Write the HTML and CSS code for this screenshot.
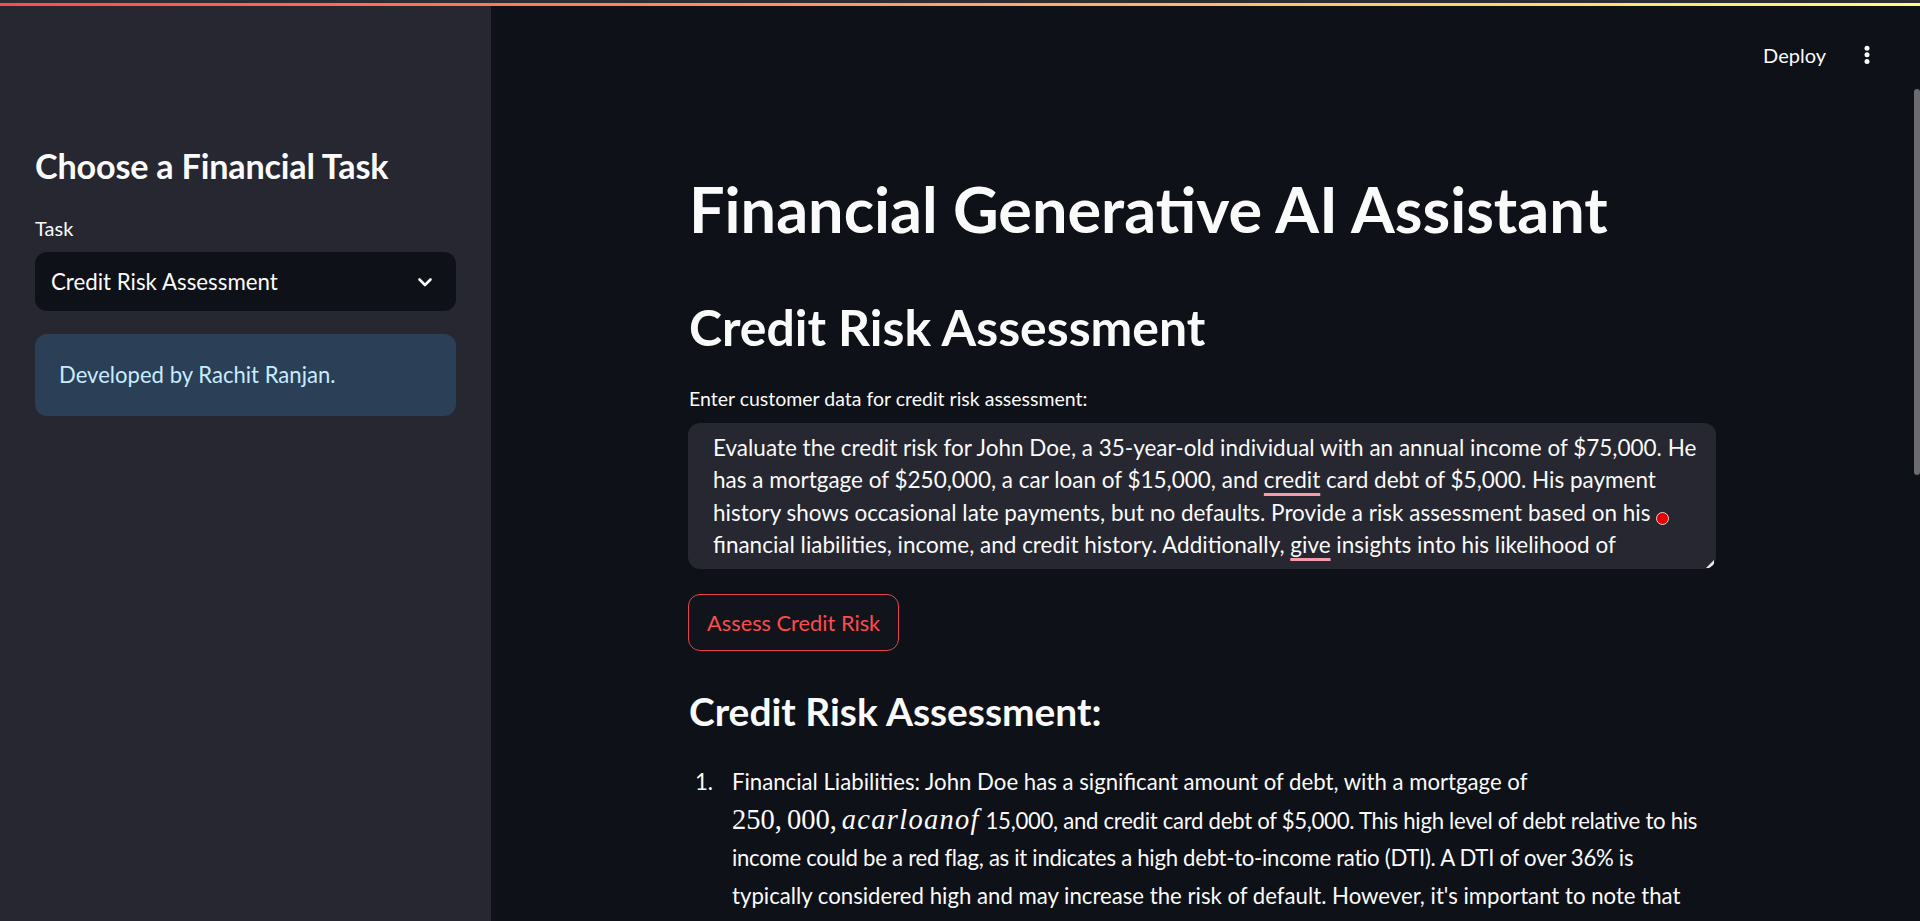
FILE: index.html
```html
<!DOCTYPE html>
<html lang="en">
<head>
<meta charset="utf-8">
<title>Financial Generative AI Assistant</title>
<link rel="stylesheet" href="styles.css">
</head>
<body>
<div class="app">
  <aside class="sidebar">
    <h2 class="side-title">Choose a Financial Task</h2>
    <label class="side-label">Task</label>
    <div class="select">
      <span class="select-value">Credit Risk Assessment</span>
      <svg class="chevron" width="24" height="24" viewBox="0 0 24 24"><path d="M6.5 9.5l5.5 5.5 5.5-5.5" fill="none" stroke="#fafafa" stroke-width="2.6" stroke-linecap="round" stroke-linejoin="round"/></svg>
    </div>
    <div class="info">Developed by Rachit Ranjan.</div>
  </aside>
  <main class="main">
    <header class="topbar">
      <span class="deploy">Deploy</span>
      <svg class="menu" width="20" height="24" viewBox="0 0 20 24"><circle cx="10" cy="5.3" r="2.5" fill="#fafafa"/><circle cx="10" cy="11.8" r="2.5" fill="#fafafa"/><circle cx="10" cy="18.5" r="2.5" fill="#fafafa"/></svg>
    </header>
    <div class="block">
      <h1 class="title">Financial Generative AI Assistant</h1>
      <h2 class="subtitle">Credit Risk Assessment</h2>
      <label class="field-label">Enter customer data for credit risk assessment:</label>
      <div class="textarea">
        <span class="ta-line">Evaluate the credit risk for John Doe, a 35-year-old individual with an annual income of $75,000. He</span>
        <span class="ta-line">has a mortgage of $250,000, a car loan of $15,000, and <span class="spell">credit</span> card debt of $5,000. His payment</span>
        <span class="ta-line">history shows occasional late payments, but no defaults. Provide a risk assessment based on his</span>
        <span class="ta-line">financial liabilities, income, and credit history. Additionally, <span class="spell">give</span> insights into his likelihood of</span>
        <span class="rec-dot"></span>
        <span class="resize"></span>
      </div>
      <button class="btn">Assess Credit Risk</button>
      <h3 class="section">Credit Risk Assessment:</h3>
      <ol class="result">
        <li>
          <span class="num">1.</span>
          <div class="r-text">
            <span class="r-line">Financial Liabilities: John Doe has a significant amount of debt, with a mortgage of</span>
            <span class="r-line"><span class="math">250,<span class="thin"></span>000,<span class="thin"></span><i>acarloanof</i></span> <span class="tight">15,000, and credit card debt of $5,000. This high level of debt relative to his</span></span>
            <span class="r-line"><span class="tight">income could be a red flag, as it indicates a high debt-to-income ratio (DTI). A DTI of over 36% is</span></span>
            <span class="r-line">typically considered high and may increase the risk of default. However, it's important to note that</span>
          </div>
        </li>
      </ol>
    </div>
    <div class="scroll-thumb"></div>
  </main>
  <div class="decoration"></div>
</div>
</body>
</html>
```
FILE: styles.css
```css
* { box-sizing: border-box; }
html, body { margin: 0; padding: 0; height: 100%; }
body {
  background: #0e1117;
  color: #fafafa;
  font-family: Lato, "Open Sans", sans-serif;
  overflow: hidden;
}
.app {
  display: flex;
  height: 100vh;
  position: relative;
}
.decoration {
  position: absolute;
  left: 0; top: 0; right: 0;
  height: 6px;
  border-top: 3px solid #2c2d34;
  background: linear-gradient(90deg, #ff4b4b, #fffd80);
}

/* Sidebar */
.sidebar {
  width: 491px;
  flex: none;
  background: #262730;
  padding: 144px 35px 0 35px;
  display: flex;
  flex-direction: column;
}
.side-title {
  margin: 0;
  font-size: 34.2px;
  line-height: 44px;
  font-weight: 700;
  letter-spacing: -0.2px;
}
.side-label {
  margin-top: 26px;
  font-size: 20px;
  line-height: 28px;
}
.select {
  margin-top: 10px;
  height: 59px;
  background: #0e1117;
  border-radius: 12px;
  display: flex;
  align-items: center;
  justify-content: space-between;
  padding: 0 19px 0 16px;
}
.select-value { font-size: 22.3px; line-height: 59px; }
.chevron { display: block; }
.info {
  margin-top: 23px;
  height: 82px;
  border-radius: 12px;
  background: #2b3f57;
  color: #c7ebff;
  font-size: 22.1px;
  line-height: 82px;
  padding-left: 24px;
}

/* Main */
.main {
  flex: 1;
  position: relative;
  overflow: hidden;
}
.topbar {
  height: 110px;
  display: flex;
  align-items: center;
  justify-content: flex-end;
  gap: 31px;
  padding-right: 43px;
}
.deploy { font-size: 20px; line-height: 24px; }
.menu { display: block; }
.block {
  margin-left: 197px;
  width: 1028px;
  display: flex;
  flex-direction: column;
  align-items: flex-start;
}
.title {
  margin: 59px 0 0 1px;
  font-size: 63px;
  line-height: 80px;
  font-weight: 700;
}
.subtitle {
  margin: 48px 0 0 1px;
  font-size: 49.9px;
  line-height: 60px;
  font-weight: 700;
}
.field-label {
  margin: 28px 0 0 1px;
  font-size: 19.5px;
  line-height: 28px;
}
.textarea {
  position: relative;
  margin-top: 10px;
  width: 1028px;
  height: 146px;
  background: #262730;
  border-radius: 12px;
  padding: 9px 0 0 25px;
  overflow: hidden;
}
.ta-line {
  display: block;
  white-space: nowrap;
  font-size: 22.5px;
  line-height: 32.33px;
}
.spell {
  text-decoration: underline;
  text-decoration-color: #f59aaa;
  text-decoration-thickness: 3px;
  text-underline-offset: 5px;
  text-decoration-skip-ink: none;
}
.rec-dot {
  position: absolute;
  left: 968px;
  top: 89px;
  width: 13px;
  height: 13px;
  border-radius: 50%;
  background: #e60000;
  border: 1px solid #f3c9c9;
}
.resize {
  position: absolute;
  right: 2px;
  bottom: 1px;
  width: 0; height: 0;
  border-left: 8px solid transparent;
  border-bottom: 8px solid #e8e8e8;
}
.btn {
  margin-top: 25px;
  height: 57px;
  padding: 0 18px;
  background: #11141b;
  border: 1px solid #e8434a;
  border-radius: 12px;
  color: #ff4b4b;
  font-family: inherit;
  font-size: 21.8px;
  line-height: 1;
}
.section {
  margin: 36px 0 0 1px;
  font-size: 38.9px;
  line-height: 48px;
  font-weight: 700;
}
.result {
  margin: 28px 0 0 0;
  padding: 0;
  list-style: none;
  font-size: 22.2px;
  line-height: 37.67px;
}
.result li { display: flex; }
.num { width: 44px; flex: none; padding-left: 7px; }
.r-text { display: flex; flex-direction: column; }
.r-line { display: block; white-space: nowrap; }
.tight { letter-spacing: -0.3px; }
.math {
  font-family: "Liberation Serif", "DejaVu Serif", serif;
  font-size: 28.5px;
}
.math i { letter-spacing: 1.3px; }
.thin { display: inline-block; width: 5px; }

.scroll-thumb {
  position: absolute;
  right: 0;
  top: 89px;
  width: 6px;
  height: 386px;
  background: #6b6b70;
  border-radius: 3px;
}
```
